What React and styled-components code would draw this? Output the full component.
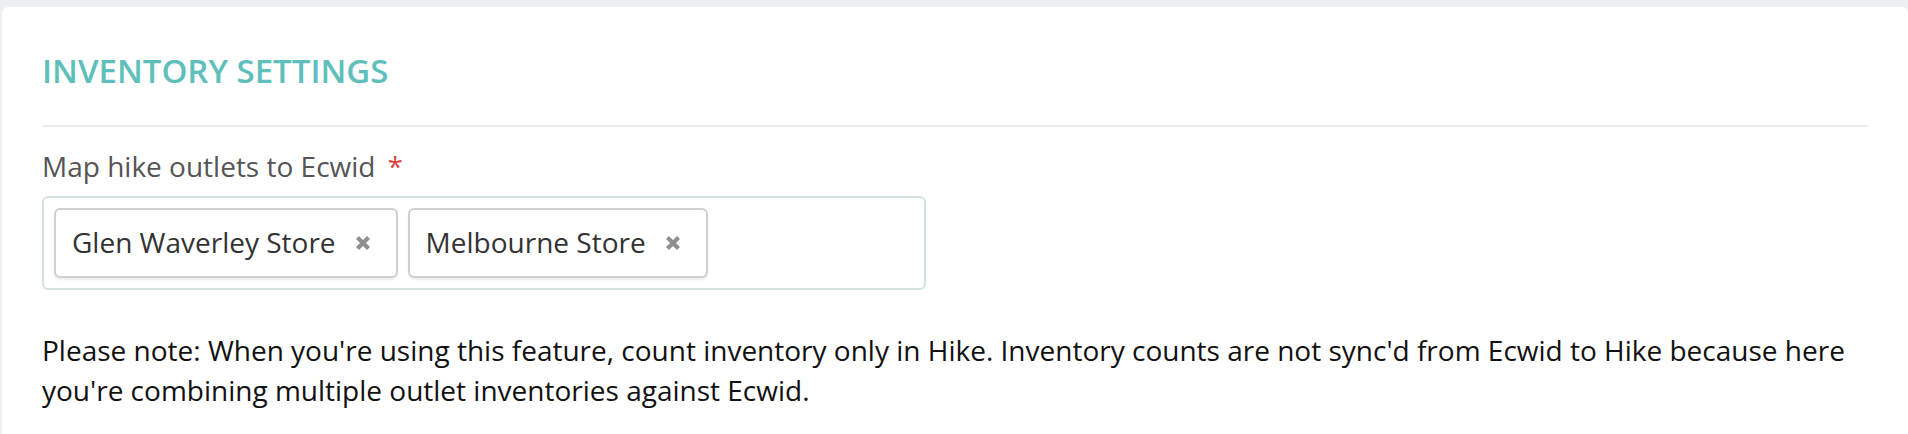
import React from "react";
import styled, { createGlobalStyle } from "styled-components";

const Global = createGlobalStyle`
  html, body { margin: 0; padding: 0; background: #edeff3; }
  body { padding: 7px 0 0 2px; font-family: "Open Sans", "Noto Sans", sans-serif; }
`;

const Card = styled.section`
  background: #ffffff;
  border-radius: 6px 6px 0 0;
  padding: 41px 40px 40px 40px;
  min-height: 420px;
  box-sizing: border-box;
`;

const Heading = styled.h2`
  margin: 0;
  font-size: 33px;
  line-height: 45px;
  font-weight: 600;
  color: #5ebfbb;
`;

const Divider = styled.hr`
  margin: 32px 0 0 0;
  border: 0;
  height: 2px;
  background: #eaecef;
`;

const Field = styled.div`
  display: flex;
  flex-direction: column;
  margin-top: 20px;
`;

const Label = styled.label`
  font-size: 28px;
  line-height: 38px;
  color: #555555;
`;

const Required = styled.span`
  color: #d9443f;
  margin-left: 12px;
`;

const TagBox = styled.div`
  margin-top: 11px;
  width: 884px;
  box-sizing: border-box;
  border: 2px solid #d5e2e1;
  border-radius: 6px;
  padding: 10px;
  display: flex;
  gap: 10px;
  flex-wrap: wrap;
`;

const Tag = styled.div`
  height: 70px;
  box-sizing: border-box;
  border: 2px solid #cfcfcf;
  border-radius: 6px;
  box-shadow: 0 2px 2px rgba(0, 0, 0, 0.07);
  padding: 0 25px 3px 16px;
  display: flex;
  align-items: center;
  gap: 19px;
  font-size: 28px;
  line-height: 38px;
  color: #333333;
`;

const Remove = styled.span`
  display: inline-flex;
  width: 16px;
  height: 16px;
  margin-top: 2px;
  color: #8f8f8f;
`;

const Note = styled.p`
  margin: 40px 0 0 0;
  font-size: 28px;
  line-height: 40px;
  color: #111111;
`;

const XIcon = () => (
  <svg width="16" height="16" viewBox="0 0 16 16">
    <path d="M2.5 2.5 L13.5 13.5 M13.5 2.5 L2.5 13.5" stroke="currentColor" strokeWidth="4.2" strokeLinecap="butt" />
  </svg>
);

const outlets = ["Glen Waverley Store", "Melbourne Store"];

export default function App() {
  return (
    <>
      <Global />
      <Card>
        <Heading>INVENTORY SETTINGS</Heading>
        <Divider />
        <Field>
          <Label>
            Map hike outlets to Ecwid<Required>*</Required>
          </Label>
          <TagBox>
            {outlets.map((o) => (
              <Tag key={o}>
                {o}
                <Remove>
                  <XIcon />
                </Remove>
              </Tag>
            ))}
          </TagBox>
        </Field>
        <Note>
          Please note: When you're using this feature, count inventory only in Hike. Inventory counts are not sync'd from Ecwid to Hike because here you're combining multiple outlet inventories against Ecwid.
        </Note>
      </Card>
    </>
  );
}
